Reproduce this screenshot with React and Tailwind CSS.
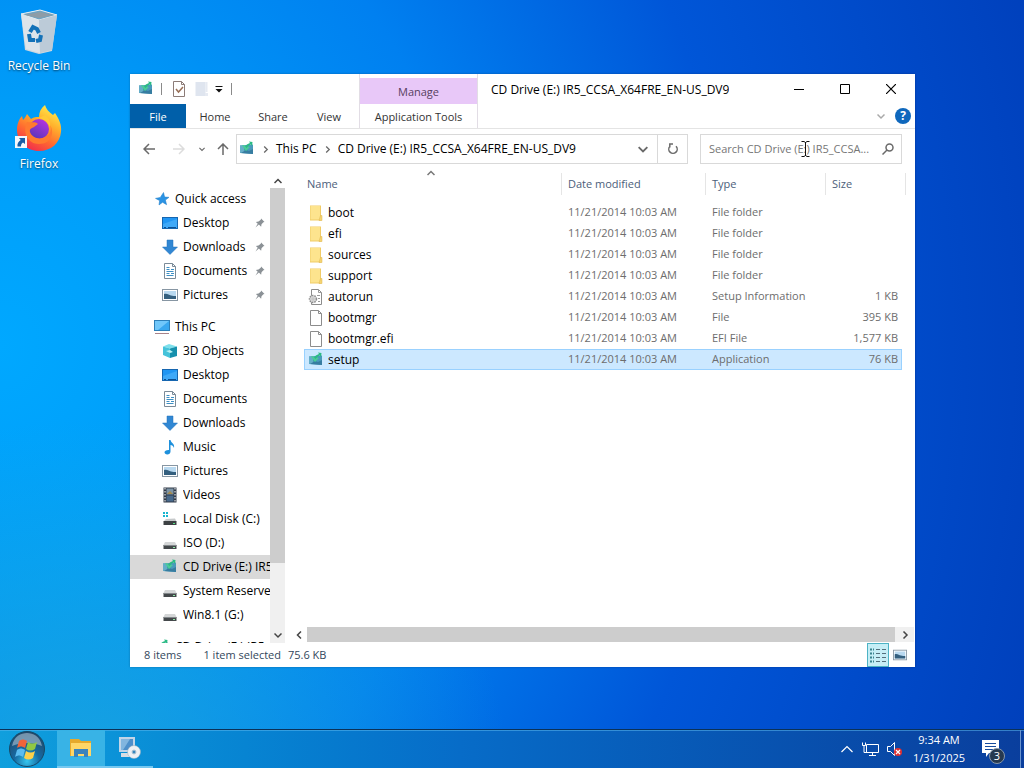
import React, { useState } from 'react';

const VOLUME = 'CD Drive (E:) IR5_CCSA_X64FRE_EN-US_DV9';

const quickAccess = [
  { name: 'Desktop', icon: 'desktop' },
  { name: 'Downloads', icon: 'downloads' },
  { name: 'Documents', icon: 'documents' },
  { name: 'Pictures', icon: 'pictures' },
];

const thisPc = [
  { name: '3D Objects', icon: 'objects' },
  { name: 'Desktop', icon: 'desktop' },
  { name: 'Documents', icon: 'documents' },
  { name: 'Downloads', icon: 'downloads' },
  { name: 'Music', icon: 'music' },
  { name: 'Pictures', icon: 'pictures' },
  { name: 'Videos', icon: 'videos' },
  { name: 'Local Disk (C:)', icon: 'system' },
  { name: 'ISO (D:)', icon: 'drive' },
  { name: 'CD Drive (E:) IR5_CCSA', icon: 'setup', active: true },
  { name: 'System Reserved', icon: 'drive' },
  { name: 'Win8.1 (G:)', icon: 'drive' },
];

const files = [
  { name: 'boot', type: 'File folder', size: '', icon: 'folder' },
  { name: 'efi', type: 'File folder', size: '', icon: 'folder' },
  { name: 'sources', type: 'File folder', size: '', icon: 'folder' },
  { name: 'support', type: 'File folder', size: '', icon: 'folder' },
  { name: 'autorun', type: 'Setup Information', size: '1 KB', icon: 'inf' },
  { name: 'bootmgr', type: 'File', size: '395 KB', icon: 'file' },
  { name: 'bootmgr.efi', type: 'EFI File', size: '1,577 KB', icon: 'file' },
  { name: 'setup', type: 'Application', size: '76 KB', icon: 'setup' },
];

const shapes = {
  star: (
    <path d="M9.5 1.5 10.6 6l4.4.3-3.6 2.8 1.2 4.6-4-2.4L5 14l.6-4.4L1.5 7.4l4.8-1Z" fill="#2a93e4" stroke="#1b7ac6" strokeWidth=".5" />
  ),
  desktop: (
    <>
      <rect x=".5" y="2.5" width="15" height="11" fill="#2196f3" stroke="#1666b0" />
      <path d="M1 9 15 4v9H1Z" fill="#3fa9f8" />
      <path d="M2 12.5h2M6 12.5h8" stroke="#0c4f92" />
    </>
  ),
  downloads: <path d="M5 1h6v7h4.5L8 15.5.5 8H5Z" fill="#3187d3" stroke="#2170b8" strokeWidth=".5" />,
  documents: (
    <>
      <path d="M2.5.5h8l3 3v12h-11Z" fill="#fff" stroke="#7b8b98" />
      <path d="M10.5.5v3h3" fill="none" stroke="#7b8b98" />
      <path d="M4.5 4.5h3M4.5 6.5h3M9 6.5h3M4.5 8.5h7M4.5 10.5h3M9 10.5h3M4.5 12.5h7" stroke="#3d8fc4" />
    </>
  ),
  pictures: (
    <>
      <rect x=".5" y="2.5" width="15" height="11" fill="#fff" stroke="#8796a3" />
      <path d="M2 4h12v8H2Z" fill="#b9d9f0" />
      <path d="M2 7c3-1 5 1 7 1.5s3 .5 5 .5v3H2Z" fill="#35607f" />
    </>
  ),
  pc: (
    <>
      <rect x=".5" y="1.5" width="15" height="10" fill="#39a8ef" stroke="#2d7fb8" />
      <path d="M1 2h14L4 11H1Z" fill="#70c7fa" />
      <path d="M1 14.5h14" stroke="#a7838a" />
    </>
  ),
  objects: (
    <>
      <path d="M1 3.5 7 1l8 2.5-7 2Z" fill="#7ee0ec" />
      <path d="M1 3.5 8 5.5V15l-7-3Z" fill="#45c3da" />
      <path d="m8 5.5 7-2V13l-7 2Z" fill="#1590ad" />
      <path d="m4 8 4-1 3 2-3 1Z" fill="#baf3f5" />
    </>
  ),
  music: <path d="M7 1h1.5c.5 3 4.5 3.500 3.500 8-.6-2-2-2.800-3.500-3v6.500c0 2-1.500 3-3.200 3S2.500 14.500 2.500 13.300s1.700-2.500 4.500-2.300Z" fill="#1e90dc" />,
  videos: (
    <>
      <path d="M1.5.5h13v15h-13Z" fill="#303a48" />
      <path d="M4.5 1.5h7v6h-7Z" fill="#7c94a7" />
      <path d="M4.5 8.5h7v6h-7Z" fill="#47698c" />
      <path d="m5 7 3-3 3 3Z" fill="#a58b4e" />
      <path d="M3 1v14M13 1v14" stroke="#fff" strokeDasharray="1.5 1.5" />
    </>
  ),
  system: (
    <>
      <path d="M1 1h2v2H1ZM4 1h2v2H4ZM1 4h2v2H1ZM4 4h2v2H4Z" fill="#18b5cf" />
      <path d="m4 8 9-.5 1.5 3h-13Z" fill="#c6c9ca" />
      <path d="M1.5 10h13v4h-13Z" fill="#3d4143" />
      <path d="M11 12.5h2" stroke="#56e384" />
    </>
  ),
  drive: (
    <>
      <path d="M3 7h10l1.5 3h-13Z" fill="#d4d6d7" />
      <path d="M1.5 10h13v4h-13Z" fill="#44484b" />
      <path d="M1.5 10.5h13" stroke="#83888b" />
      <path d="M11 12.5h2" stroke="#8de8a5" />
    </>
  ),
  setup: (
    <>
      <path d="M1 4.5 14 3.5V13L1 12Z" fill="#4a9abb" />
      <path d="m1 4.5 4-.3V12l-4-.2Z" fill="#65adc8" />
      <path d="m2 12 5-3 3 1 4-2v5Z" fill="#377da1" />
      <path d="M5.500 9C5.500 4.500 8 3 11 2L10 .5l3.500.5-.5 4-1.200-1.500C9 4.500 8 6 8 9.500Z" fill="#2bbb84" />
      <path d="m3 4.500 4 5.500 4-4-2-.5L7.500 7 5 4Z" fill="#4bcb98" />
    </>
  ),
  folder: (
    <>
      <path d="M2 .5h11v15H2Z" fill="#f0cb66" />
      <path d="M2.500 1H12v13.500H2.500Z" fill="#fde48e" />
      <path d="M12.500 10.500H14v5h-3Z" fill="#f6d573" stroke="#dfb54d" strokeWidth=".5" />
    </>
  ),
  file: (
    <>
      <path d="M2.5.5h8l3 3v12h-11Z" fill="#fff" stroke="#8c8c8c" />
      <path d="M10.5.5v3h3" fill="none" stroke="#8c8c8c" />
    </>
  ),
  inf: (
    <>
      <path d="M3.5.5h7l3 3v12h-10Z" fill="#fff" stroke="#8c8c8c" />
      <path d="M10.5.5v3h3M9 6.5h3M10 9.5h2M10 12.5h2" fill="none" stroke="#9a9a9a" />
      <circle cx="5" cy="10" r="3.5" fill="#d8d8d8" stroke="#8e8e8e" strokeDasharray="1.5 1" strokeWidth="1.5" />
      <circle cx="5" cy="10" r="1" fill="#fff" stroke="#888" strokeWidth=".5" />
    </>
  ),
  pin: <path d="m9.5 2 4.500 4.500-1.500.5-2.500 2.500-.5 3.500-3-3L2 14l3-5-2.500-2.500 3.500-.5L9 3.500Z" fill="#8b9196" />,
};

const Icon = ({ name, className = 'size-4' }) => (
  <svg viewBox="0 0 16 16" className={`${className} shrink-0`} aria-hidden="true">{shapes[name]}</svg>
);

const Chevron = ({ d, className = 'size-2' }) => (
  <svg viewBox="0 0 8 8" className={`${className} shrink-0`} fill="none" stroke="currentColor" strokeWidth="1.5" aria-hidden="true">
    <path d={d} />
  </svg>
);

const UP = 'M.5 6 4 2.5 7.5 6';
const DOWN = 'M.5 2.5 4 6l3.5-3.5';
const LEFT = 'M6 .5 2.5 4 6 7.5';
const RIGHT = 'M2.5.5 6 4 2.5 7.5';

const NavItem = ({ item, pinned }) => (
  <li>
    <a href="#" className={`flex h-6 items-center gap-[5px] pl-8 whitespace-nowrap ${item.active ? 'bg-[#d9d9d9]' : ''}`}>
      <Icon name={item.icon} />
      <span className="grow overflow-hidden">{item.name}</span>
      {pinned && <Icon name="pin" className="mr-1 size-3" />}
    </a>
  </li>
);

const Ribbon = () => (
  <header className="flex h-[55px] shrink-0 border-b border-[#e4e4e4]">
    <div className="flex w-[229px] shrink-0 flex-col">
      <div className="flex h-[31px] items-center pl-2">
        <Icon name="setup" />
        <span className="ml-[7px] h-3 w-px bg-[#8a8a8a]" />
        <button aria-label="Properties" className="ml-[9px]">
          <svg viewBox="0 0 16 16" className="size-4">
            <path d="M2.5.5h8l3 3v12h-11Z" fill="#fff" stroke="#8c7c78" />
            <path d="M10.5.5v3h3" fill="none" stroke="#8c7c78" />
            <path d="m5 8 2.5 3L12 6" fill="none" stroke="#986f57" strokeWidth="1.5" />
          </svg>
        </button>
        <button aria-label="New folder" className="ml-[7px]">
          <svg viewBox="0 0 16 16" className="size-4">
            <path d="M1.5 1h10v14h-10Z" fill="#dfe5ef" />
            <path d="M11.5 1h2v10h-2ZM11 12h3v3h-3Z" fill="#e6eaf2" />
          </svg>
        </button>
        <button aria-label="Customize Quick Access Toolbar" className="ml-[5px]">
          <svg viewBox="0 0 8 8" className="size-2"><path d="M.5 1h7v1h-7ZM.5 4h7L4 7.5Z" fill="#111" /></svg>
        </button>
        <span className="ml-2 h-3 w-px bg-[#8a8a8a]" />
      </div>
      <div className="flex h-6 text-[11px] text-[#333]">
        <button className="w-14 bg-[#005fa9] pt-[2px] text-white">File</button>
        <button className="w-[58px] pt-[2px]">Home</button>
        <button className="w-[58px] pt-[2px]">Share</button>
        <button className="w-[54px] pt-[2px]">View</button>
      </div>
    </div>
    <div className="flex w-[119px] shrink-0 flex-col border-x border-[#e2dde5] pt-1 text-[11px]">
      <div className="flex h-[27px] items-center justify-center bg-[#e8c8f8] pt-[2px] text-[#57405f]">Manage</div>
      <button className="h-6 pt-[2px] whitespace-nowrap text-[#333]">Application Tools</button>
    </div>
    <div className="flex min-w-0 grow flex-col">
      <div className="flex h-[31px] items-center justify-between pr-px pl-[13px]">
        <h1 className="truncate pt-px text-black">{VOLUME}</h1>
        <div className="flex shrink-0">
          <button aria-label="Minimize" className="flex h-[30px] w-[46px] items-center justify-center">
            <svg viewBox="0 0 10 10" className="size-[10px]"><path d="M0 5.5h10" stroke="#000" /></svg>
          </button>
          <button aria-label="Maximize" className="flex h-[30px] w-[46px] items-center justify-center">
            <svg viewBox="0 0 10 10" className="size-[10px]"><path d="M.5.5h9v9h-9Z" fill="none" stroke="#000" /></svg>
          </button>
          <button aria-label="Close" className="flex h-[30px] w-[46px] items-center justify-center">
            <svg viewBox="0 0 10 10" className="size-[10px]"><path d="m0 0 10 10M10 0 0 10" stroke="#000" strokeWidth="1.2" /></svg>
          </button>
        </div>
      </div>
      <div className="flex h-6 items-center justify-end gap-[10px] pr-1 text-[#a9a9a9]">
        <Chevron d={DOWN} />
        <button aria-label="Help" className="flex size-4 items-center justify-center rounded-full bg-[#0f68bd] font-bold text-white">?</button>
      </div>
    </div>
  </header>
);

const AddressBar = () => (
  <div className="flex h-11 shrink-0 items-start pt-[5px] pr-[13px] text-[#6a6a6a]">
    <div className="flex h-[30px] w-[106px] shrink-0 items-center pl-[13px]">
      <button aria-label="Back">
        <svg viewBox="0 0 12 12" className="size-3" fill="none" stroke="currentColor" strokeWidth="1.5"><path d="M6 1 1 6l5 5M1 6h11" /></svg>
      </button>
      <button aria-label="Forward" className="ml-[18px] text-[#dcdcdc]">
        <svg viewBox="0 0 12 12" className="size-3" fill="none" stroke="currentColor" strokeWidth="1.5"><path d="m6 1 5 5-5 5M11 6H0" /></svg>
      </button>
      <button aria-label="Recent locations" className="ml-[14px]"><Chevron d={DOWN} className="size-[6px]" /></button>
      <button aria-label="Up" className="ml-3">
        <svg viewBox="0 0 12 12" className="size-3" fill="none" stroke="currentColor" strokeWidth="1.5"><path d="m1 6 5-5 5 5M6 1v11" /></svg>
      </button>
    </div>
    <div className="flex h-[30px] min-w-0 grow items-center border border-[#d9d9d9]">
      <Icon name="setup" className="ml-[2px] size-4" />
      <span className="flex w-[21px] justify-center"><Chevron d={RIGHT} className="size-[7px]" /></span>
      <button className="text-black">This PC</button>
      <span className="flex w-[21px] justify-center"><Chevron d={RIGHT} className="size-[7px]" /></span>
      <button className="truncate text-black">{VOLUME}</button>
      <button aria-label="Previous locations" className="ml-auto px-[9px]"><Chevron d={DOWN} className="size-[10px]" /></button>
      <button aria-label="Refresh" className="flex h-full w-[30px] shrink-0 items-center justify-center border-l border-[#d9d9d9]">
        <svg viewBox="0 0 12 12" className="size-3" fill="none" stroke="currentColor" strokeWidth="1.5">
          <path d="M9 3.2A4.2 4.2 0 1 1 3 3.2M6 1H2.800v3.500" />
        </svg>
      </button>
    </div>
    <div className="relative ml-3 flex h-[30px] w-[202px] shrink-0 items-center border border-[#d9d9d9] pr-[7px] pl-2">
      <input
        type="search"
        aria-label={`Search ${VOLUME}`}
        placeholder="Search CD Drive (E:) IR5_CCSA..."
        className="min-w-0 grow bg-transparent text-[11px] outline-none placeholder:text-[#767676]"
      />
      <svg viewBox="0 0 12 12" className="size-3 shrink-0" fill="none" stroke="currentColor" strokeWidth="1.5">
        <circle cx="7.5" cy="4.5" r="3.5" /><path d="M5 7 .5 11.5" />
      </svg>
      {/* text cursor */}
      <svg viewBox="0 0 9 16" className="absolute top-[6px] left-[100px] h-4 w-[9px]" fill="none" stroke="#111">
        <path d="M.5.5H3l1.5 1 1.5-1h2.5M4.5 1v14M.5 15.5H3l1.5-1 1.5 1h2.5" />
      </svg>
    </div>
  </div>
);

const NavPane = () => (
  <nav aria-label="Navigation pane" className="flex w-[156px] shrink-0 overflow-hidden text-black">
    <div className="w-[140px] shrink-0 overflow-hidden pt-[14px]">
      <a href="#" className="flex h-6 items-center gap-[5px] pl-6"><Icon name="star" />Quick access</a>
      <ul>
        {quickAccess.map(item => <NavItem key={item.name} item={item} pinned />)}
      </ul>
      <a href="#" className="mt-2 flex h-6 items-center gap-[5px] pl-6"><Icon name="pc" />This PC</a>
      <ul>
        {thisPc.map(item => <NavItem key={item.name} item={item} />)}
      </ul>
      <a href="#" className="mt-2 flex h-6 items-center gap-[5px] pl-6 whitespace-nowrap"><Icon name="setup" />CD Drive (E:) IR5_CCSA</a>
    </div>
    <div className="flex w-[15px] flex-col items-center bg-[#f0f0f0] text-[#444]">
      <span className="flex h-[15px] w-full shrink-0 items-center justify-center bg-white"><Chevron d={UP} /></span>
      <div className="w-full grow bg-[#cdcdcd]" />
      <span className="flex h-20 shrink-0 items-end pb-1"><Chevron d={DOWN} /></span>
    </div>
  </nav>
);

const FileList = ({ selected, onSelect }) => (
  <table className="ml-[18px] w-[602px] table-fixed border-separate border-spacing-0 text-left text-[11px]">
    <colgroup>
      <col className="w-[258px]" />
      <col className="w-36" />
      <col className="w-[120px]" />
      <col className="w-[76px]" />
      <col className="w-1" />
    </colgroup>
    <thead>
      <tr className="h-[22px] text-[#4c607a]">
        <th className="relative border-r border-[#e5e5e5] p-0 pl-[3px] font-normal">
          Name
          <span className="absolute -top-1 left-[123px] text-[#777]"><Chevron d={UP} /></span>
        </th>
        <th className="border-r border-[#e5e5e5] p-0 pl-[6px] font-normal">Date modified</th>
        <th className="border-r border-[#e5e5e5] p-0 pl-[6px] font-normal">Type</th>
        <th className="p-0 pl-[6px] font-normal">Size</th>
        <th className="border-r border-[#e5e5e5] p-0" />
      </tr>
      <tr className="h-[7px]" />
    </thead>
    <tbody className="text-[#6d6d6d]">
      {files.map(file => (
        <tr
          key={file.name}
          onClick={() => onSelect(file.name)}
          className={`h-[21px] [&>td:first-child]:border-l [&>td:nth-child(4)]:border-r [&>td:not(:last-child)]:border-y ${selected === file.name ? '[&>td]:border-[#99d1ff] [&>td:not(:last-child)]:bg-[#cce8ff]' : '[&>td]:border-transparent'}`}
        >
          <td className="p-0 pl-[3px]">
            <div className="flex items-center gap-1 text-xs text-black"><Icon name={file.icon} />{file.name}</div>
          </td>
          <td className="p-0 pl-[6px] whitespace-nowrap">11/21/2014 10:03 AM</td>
          <td className="p-0 pl-[6px] whitespace-nowrap">{file.type}</td>
          <td className="p-0 pr-[3px] text-right whitespace-nowrap">{file.size}</td>
          <td className="p-0" />
        </tr>
      ))}
    </tbody>
  </table>
);

const StatusBar = () => (
  <footer className="flex h-6 shrink-0 items-center pr-2 pl-[14px] text-[11px] text-[#33475c]">
    <span>8 items</span>
    <span className="ml-[22px]">1 item selected</span>
    <span className="ml-[7px]">75.6 KB</span>
    <button aria-label="Details view" className="ml-auto border border-[#4db3c5] bg-[#c5eef6] px-px py-[2px]">
      <svg viewBox="0 0 18 18" className="size-[18px]" stroke="#526f7c" fill="none">
        <path d="M1 3.5h4M1 7.5h4M1 11.5h4M1 15.5h4" stroke="#39838f" strokeWidth="2" strokeDasharray="2 1" />
        <path d="M7 3.5h4M13 3.5h4M7 7.5h4M13 7.5h4M7 11.5h4M13 11.5h4M7 15.5h4M13 15.5h4" />
      </svg>
    </button>
    <button aria-label="Large icons view" className="ml-1"><Icon name="pictures" className="size-[14px]" /></button>
  </footer>
);

const DesktopIcons = () => (
  <div className="flex w-[78px] flex-col items-center text-center text-white [text-shadow:0_1px_2px_#0009]">
    <a href="#" className="flex flex-col items-center pt-2">
      <svg viewBox="0 0 48 48" className="size-12">
        <path d="m6 6 19-4 17 5-5 36-13 3-14-4Z" fill="#cfd8df" />
        <path d="m6 6 19-4 17 5-18 5Z" fill="#6fa4c2" stroke="#e7edf1" />
        <path d="m9 7 16-3 13 3-14 3Z" fill="#8e9ca6" />
        <path d="m6 6 18 6 1 33-14-4Z" fill="#dde4ea" />
        <path d="m24 12 18-5-5 35-12 3Z" fill="#bccbd8" />
        <g fill="none" stroke="#1472b8" strokeWidth="4">
          <path d="m15 24 3-5 4 2 2 4" />
          <path d="m14 26 1 6h5" />
          <path d="m21 33 4-1 1-5" />
        </g>
      </svg>
      <span className="mt-[2px] text-xs">Recycle Bin</span>
    </a>
    <a href="#" className="relative mt-[30px] flex flex-col items-center">
      <svg viewBox="0 0 48 48" className="size-12">
        <defs>
          <linearGradient id="fox" x1=".8" y1="0" x2=".25" y2="1">
            <stop offset="0" stopColor="#fff34f" />
            <stop offset=".35" stopColor="#ffb02c" />
            <stop offset=".65" stopColor="#ff6b30" />
            <stop offset="1" stopColor="#f0264f" />
          </linearGradient>
          <linearGradient id="globe" x1=".8" y1="0" x2=".2" y2="1">
            <stop offset="0" stopColor="#b833e1" />
            <stop offset="1" stopColor="#5436b8" />
          </linearGradient>
        </defs>
        <path d="M30 1c1 4 4 7 8 10l2-2c4 6 7 12 6 19-1 11-10 19-22 19S2 38 2 26c0-6 2-11 5-14l1 4c2-2 3-4 4-6l4 5c3-2 5-2 8-2 0-5 2-9 6-12Z" fill="url(#fox)" />
        <circle cx="24" cy="25" r="10" fill="url(#globe)" />
        <path d="M12 18c5 1 8-1 11 2l-4 3c-2 1-5 2-4 5 2 6 10 8 15 5 5-2 7-7 5-12 5 8 1 19-11 19-11 0-17-11-12-22Z" fill="#ff7a2f" />
        <path d="M24 14c5 1 9 4 11 9 1-6-2-10-5-12Z" fill="#ffc936" />
      </svg>
      <svg viewBox="0 0 12 12" className="absolute bottom-6 left-0 size-3" aria-hidden="true">
        <path d="M0 0h12v12H0Z" fill="#f4f8fc" />
        <path d="M4 2h6v6L8 6.5C6 8 6 9 6 10.5H2.5C2 7.5 3.5 5.5 5.7 4Z" fill="#195da5" />
      </svg>
      <span className="mt-1 text-xs">Firefox</span>
    </a>
  </div>
);

const Taskbar = () => (
  <footer className="flex h-[39px] items-stretch border-t border-[#0b3158] bg-linear-to-r from-[#109fdd] via-[#076cc8] via-45% to-[#0a3e9d] text-[11px] text-white shadow-[inset_0_1px_0_#5cb8ee88]">
    <button aria-label="Start" className="flex w-[57px] items-center pl-2">
      <svg viewBox="0 0 38 38" className="size-[38px]">
        <defs>
          <radialGradient id="orb" cx=".5" cy=".85" r=".8">
            <stop offset="0" stopColor="#34c6ef" />
            <stop offset=".45" stopColor="#1669a1" />
            <stop offset="1" stopColor="#234a6c" />
          </radialGradient>
        </defs>
        <circle cx="19" cy="19" r="17.5" fill="url(#orb)" stroke="#164967" />
        <path d="M4 16C6 6 13 3 19 3s13 3 15 13c-9-4-21-4-30 0Z" fill="#b9cddd" opacity=".55" />
        <path d="M11 11c3-2 5-2 8 0l-2 7c-3-2-5-2-8 0Z" fill="#f0643a" />
        <path d="M20 12c3 2 6 2 9 0l-2 7c-3 2-6 2-9 0Z" fill="#91c844" />
        <path d="M9 20c3-2 5-2 8 0l-2 7c-3-2-5-2-8 0Z" fill="#5bbcf0" />
        <path d="M18 21c3 2 6 2 9 0l-2 7c-3 2-6 2-9 0Z" fill="#fdd04a" />
      </svg>
    </button>
    <button aria-label="File Explorer" className="flex w-12 items-center justify-center border-b-2 border-[#76c8f0] bg-[#38b3e6]">
      <svg viewBox="0 0 24 24" className="size-6">
        <path d="M1 3h9l2 2h10v15H1Z" fill="#e6a92c" />
        <path d="M2 7h20v13H2Z" fill="#ffd667" />
        <path d="M5 13h14v8h-4v-3H9v3H5Z" fill="#3a83bd" />
      </svg>
    </button>
    <button aria-label="Setup" className="flex w-12 items-center justify-center border-b-2 border-[#76c8f0]">
      <svg viewBox="0 0 24 24" className="size-6">
        <path d="M2 1h16v15H2Z" fill="#c1d5e8" />
        <path d="M4 3h12v11H4Z" fill="#4d8fca" />
        <path d="M4 3h9L6 14H4Z" fill="#81b5df" />
        <path d="M4 17h11v4H4Z" fill="#d7dde3" />
        <circle cx="17" cy="16" r="6.5" fill="#edf1f4" stroke="#9badb9" strokeWidth=".5" />
        <circle cx="17" cy="16" r="2" fill="#3687bd" stroke="#b5c8d4" />
      </svg>
    </button>
    <div className="ml-auto flex items-center">
      <button aria-label="Show hidden icons">
        <svg viewBox="0 0 12 12" className="size-3" fill="none" stroke="currentColor" strokeWidth="1.2"><path d="m.5 9 5.5-5.5L11.5 9" /></svg>
      </button>
      <svg viewBox="0 0 18 16" className="ml-[9px] h-4 w-[18px]" fill="none" stroke="currentColor">
        <path d="M4.5 3.5h12v8h-12ZM10.5 11.5v3M7 14.5h7M.5 1.5v3h3v-3M2 5v6.5h3" />
      </svg>
      <svg viewBox="0 0 18 16" className="ml-[6px] h-4 w-[18px]" fill="none">
        <path d="M1.5 5.5h3l4-4v13l-4-4h-3Z" stroke="currentColor" />
        <circle cx="12" cy="11" r="4" fill="#dd2f32" />
        <path d="m10 9 4 4M14 9l-4 4" stroke="#fff" strokeWidth="1.2" />
      </svg>
      <time className="w-[70px] text-center leading-[18px]">9:34 AM<br />1/31/2025</time>
      <button aria-label="3 new notifications" className="relative mr-4 ml-[6px] size-6">
        <svg viewBox="0 0 24 24" className="size-6"><path d="M2 3h17v13H9l-3 4v-4H2Z" fill="#fff" /><path d="M5 6.5h11M5 9.5h11M5 12.5h8" stroke="#174b9c" /></svg>
        <span className="absolute top-[11px] left-[9px] flex size-4 items-center justify-center rounded-full border border-[#8797aa] bg-[#26394f]">3</span>
      </button>
      <div className="h-full w-1 border-l border-[#6a93cf]" />
    </div>
  </footer>
);

const App = () => {
  const [selected, setSelected] = useState('setup');

  return (
    <div className="relative flex min-h-screen flex-col bg-[radial-gradient(ellipse_at_8%_100%,#22acd6aa_0%,#22acd600_32%),radial-gradient(105%_160%_at_0%_45%,#00a8ff_0%,#009cf8_20%,#0080f0_44%,#0056d8_68%,#0040bc_100%)] font-['Open_Sans',sans-serif] text-xs">
      <main className="grow">
        <DesktopIcons />
        <section aria-label={VOLUME} className="absolute top-[74px] right-[109px] bottom-[101px] left-[130px] flex flex-col overflow-hidden bg-white shadow-[0_0_2px_#0004]">
          <Ribbon />
          <AddressBar />
          <div className="flex min-h-0 grow">
            <NavPane />
            <div className="flex min-w-0 grow flex-col justify-between">
              <FileList selected={selected} onSelect={setSelected} />
              <div className="mr-px mb-px ml-1 flex h-[15px] shrink-0 items-center bg-[#f0f0f0] text-[#444]">
                <span className="flex h-full w-[17px] items-center justify-center bg-white"><Chevron d={LEFT} /></span>
                <div className="h-full grow bg-[#cdcdcd]" />
                <span className="flex w-[19px] justify-center"><Chevron d={RIGHT} /></span>
              </div>
            </div>
          </div>
          <StatusBar />
        </section>
      </main>
      <Taskbar />
    </div>
  );
};

export default App;
